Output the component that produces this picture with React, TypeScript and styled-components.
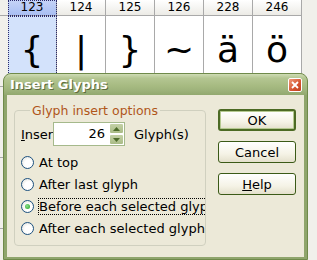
import React from "react";
import styled, { createGlobalStyle } from "styled-components";

const Global = createGlobalStyle`
  html, body { margin: 0; padding: 0; }
  body {
    background: #f1f0eb;
    font-family: "DejaVu Sans", Verdana, sans-serif;
    overflow: hidden;
  }
`;

const Page = styled.div`
  position: relative;
  width: 317px;
  height: 260px;
  overflow: hidden;
`;

const Grid = styled.div`
  display: grid;
  grid-template-columns: 8px repeat(6, 49px) 1fr;
  grid-template-rows: 16px 71px 71px 71px 71px;
  width: 317px;
`;

const RowHead = styled.div`
  background: #f1f0eb;
  border-bottom: 1px solid #a8a8a8;
  box-sizing: border-box;
`;

const Head = styled.div<{ $sel?: boolean }>`
  box-sizing: border-box;
  border-right: 1px solid #a9a9a9;
  border-bottom: 1px solid #a9a9a9;
  background: ${(p) =>
    p.$sel
      ? "linear-gradient(#c6d4f7, #a9bff3)"
      : "linear-gradient(#ffffff, #ecebe6)"};
  font-size: 12px;
  line-height: 15px;
  text-align: center;
  color: #000;
  ${(p) => (p.$sel ? "outline: 1px dotted #2a2a6a; outline-offset: -1px;" : "")}
`;

const Cell = styled.div<{ $sel?: boolean }>`
  box-sizing: border-box;
  border-right: 1px solid #a9a9a9;
  border-bottom: 1px solid #a9a9a9;
  background: ${(p) => (p.$sel ? "#d3e2fb" : "#ffffff")};
  font-size: 36px;
  line-height: 68px;
  text-align: center;
  color: #000;
  ${(p) => (p.$sel ? "outline: 1px dotted #2a2a6a; outline-offset: -1px;" : "")}
`;

const Filler = styled.div`
  background: #f1f0eb;
`;

const Dialog = styled.div`
  position: absolute;
  left: 3px;
  top: 73px;
  width: 305px;
  height: 187px;
  box-sizing: border-box;
  border-radius: 8px 8px 0 0;
  background: #8fa56c;
  border: 1px solid #6f8a4a;
  display: flex;
  flex-direction: column;
  overflow: hidden;
`;

const TitleBar = styled.div`
  height: 21px;
  flex: none;
  display: flex;
  align-items: center;
  justify-content: space-between;
  padding: 0 4px 0 6px;
  background: linear-gradient(
    #cfdcb4 0%,
    #b4c692 20%,
    #a7bb82 55%,
    #9db27a 80%,
    #92a86f 100%
  );
`;

const Title = styled.span`
  font-family: "DejaVu Sans", Verdana, sans-serif;
  font-weight: bold;
  font-size: 13px;
  color: #ffffff;
  text-shadow: 1px 1px 0 #5d6b3c;
`;

const CloseBtn = styled.div`
  width: 14px;
  height: 14px;
  box-sizing: border-box;
  border: 1px solid #ffffff;
  border-radius: 2px;
  background: linear-gradient(135deg, #f09a7a, #d5512e 60%, #c0401f);
  display: flex;
  align-items: center;
  justify-content: center;
  margin-right: 1px;
`;

const Client = styled.div`
  flex: 1;
  margin: 0 3px 2px 3px;
  background: #ece9d8;
  display: flex;
  gap: 12px;
  padding: 8px 0 0 7px;
`;

const Group = styled.fieldset`
  margin: 0;
  width: 192px;
  height: 143px;
  box-sizing: border-box;
  border: 1px solid #d0d0bf;
  border-radius: 4px;
  padding: 4px 0 0 6px;
  min-width: 0;
  overflow: hidden;
`;

const Legend = styled.legend`
  color: #b0561a;
  font-size: 12.5px;
  padding: 0 2px;
  margin-left: 9px;
`;

const CountRow = styled.div`
  display: flex;
  align-items: center;
  height: 24px;
  font-size: 13px;
  margin-bottom: 8px;
`;

const U = styled.span`
  text-decoration: underline;
`;

const LabelShort = styled.span`
  width: 32px;
  overflow: hidden;
  white-space: nowrap;
`;

const Field = styled.div`
  display: flex;
  height: 24px;
  width: 72px;
  box-sizing: border-box;
  border: 1px solid #a5b98b;
  background: #fff;
  margin-right: 9px;
`;

const FieldText = styled.div`
  flex: 1;
  text-align: right;
  padding-right: 4px;
  line-height: 22px;
`;

const Spin = styled.div`
  display: flex;
  flex-direction: column;
  width: 15px;
`;

const SpinBtn = styled.div`
  flex: 1;
  box-sizing: border-box;
  border: 1px solid #ffffff;
  border-radius: 2px;
  background: linear-gradient(#c4d1a6, #a9bb85);
  display: flex;
  align-items: center;
  justify-content: center;
`;

const Radios = styled.div`
  display: flex;
  flex-direction: column;
  gap: 6px;
`;

const RadioRow = styled.div`
  display: flex;
  align-items: center;
  height: 16px;
  font-size: 13px;
  white-space: nowrap;
`;

const RadioCircle = styled.div<{ $on?: boolean }>`
  width: 13px;
  height: 13px;
  flex: none;
  box-sizing: border-box;
  border-radius: 50%;
  border: 1px solid #1c5180;
  background: radial-gradient(circle at 60% 60%, #ffffff 40%, #dcdcd4 100%);
  margin-right: 4px;
  display: flex;
  align-items: center;
  justify-content: center;
  &::after {
    content: "";
    display: ${(p) => (p.$on ? "block" : "none")};
    width: 5px;
    height: 5px;
    border-radius: 50%;
    background: radial-gradient(circle at 40% 40%, #8ee08e, #21a121);
  }
`;

const RadioText = styled.span<{ $focus?: boolean }>`
  padding: 1px 1px;
  ${(p) => (p.$focus ? "outline: 1px dotted #000; outline-offset: -1px;" : "")}
`;

const Buttons = styled.div`
  display: flex;
  flex-direction: column;
  gap: 10px;
  padding-top: 6px;
`;

const Button = styled.div<{ $def?: boolean }>`
  width: 78px;
  height: 22px;
  box-sizing: border-box;
  border: ${(p) => (p.$def ? "2px solid #4c6a24" : "1px solid #3b5a17")};
  border-radius: 3px;
  background: linear-gradient(#ffffff, #f5f3e6 60%, #e4e0cc);
  font-size: 13px;
  display: flex;
  align-items: center;
  justify-content: center;
  color: #000;
  box-shadow: ${(p) => (p.$def ? "inset 0 0 0 1px #b5c990" : "none")};
`;

const glyphs = [
  { code: "123", ch: "{" },
  { code: "124", ch: "|" },
  { code: "125", ch: "}" },
  { code: "126", ch: "~" },
  { code: "228", ch: "ä" },
  { code: "246", ch: "ö" },
];

export default function App() {
  return (
    <Page>
      <Global />
      <Grid>
        <RowHead />
        {glyphs.map((g, i) => (
          <Head key={g.code} $sel={i === 0}>
            {g.code}
          </Head>
        ))}
        <Filler />
        {[0, 1, 2, 3].map((r) => (
          <React.Fragment key={r}>
            <RowHead />
            {glyphs.map((g, i) => (
              <Cell key={g.code} $sel={i === 0 && r === 0}>
                {r === 0 ? g.ch : ""}
              </Cell>
            ))}
            <Filler />
          </React.Fragment>
        ))}
      </Grid>
      <Dialog>
        <TitleBar>
          <Title>Insert Glyphs</Title>
          <CloseBtn>
            <svg width="8" height="8" viewBox="0 0 8 8">
              <path d="M1 1L7 7M7 1L1 7" stroke="#fff" strokeWidth="1.8" />
            </svg>
          </CloseBtn>
        </TitleBar>
        <Client>
          <Group>
            <Legend>Glyph insert options</Legend>
            <CountRow>
              <LabelShort>
                <U>I</U>nsert
              </LabelShort>
              <Field>
                <FieldText>26</FieldText>
                <Spin>
                  <SpinBtn>
                    <svg width="7" height="4" viewBox="0 0 7 4">
                      <path d="M0 4L3.5 0L7 4Z" fill="#4d6b2a" />
                    </svg>
                  </SpinBtn>
                  <SpinBtn>
                    <svg width="7" height="4" viewBox="0 0 7 4">
                      <path d="M0 0L3.5 4L7 0Z" fill="#4d6b2a" />
                    </svg>
                  </SpinBtn>
                </Spin>
              </Field>
              <span>Glyph(s)</span>
            </CountRow>
            <Radios>
              <RadioRow>
                <RadioCircle />
                <RadioText>At top</RadioText>
              </RadioRow>
              <RadioRow>
                <RadioCircle />
                <RadioText>After last glyph</RadioText>
              </RadioRow>
              <RadioRow>
                <RadioCircle $on />
                <RadioText $focus>Before each selected glyph</RadioText>
              </RadioRow>
              <RadioRow>
                <RadioCircle />
                <RadioText>After each selected glyph</RadioText>
              </RadioRow>
            </Radios>
          </Group>
          <Buttons>
            <Button $def>OK</Button>
            <Button>Cancel</Button>
            <Button>
              <span>
                <U>H</U>elp
              </span>
            </Button>
          </Buttons>
        </Client>
      </Dialog>
    </Page>
  );
}
